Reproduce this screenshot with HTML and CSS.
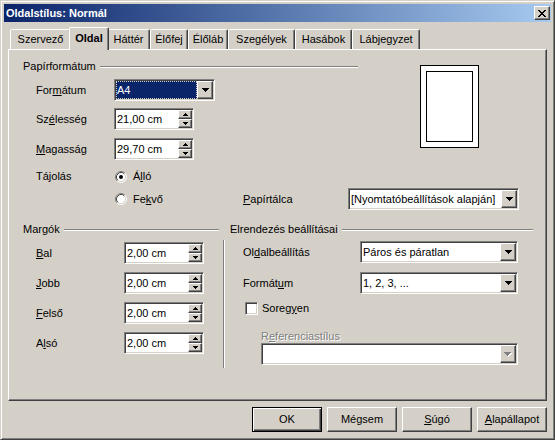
FILE: index.html
```html
<!DOCTYPE html>
<html lang="hu">
<head>
<meta charset="utf-8">
<title>Oldalstílus: Normál</title>
<link rel="stylesheet" href="styles.css">
</head>
<body>
<div class="dialog">
  <div class="titlebar">
    <span class="title">Oldalstílus: Normál</span>
    <span class="close"><svg width="8" height="7" viewBox="0 0 8 7"><path d="M0 0h2v1H0zM6 0h2v1H6zM1 1h2v1H1zM5 1h2v1H5zM2 2h4v1H2zM3 3h2v1H3zM2 4h4v1H2zM1 5h2v1H1zM5 5h2v1H5zM0 6h2v1H0zM6 6h2v1H6z"/></svg></span>
  </div>

  <div class="tabs">
    <div class="tab">Szervező</div>
    <div class="tab active">Oldal</div>
    <div class="tab">Háttér</div>
    <div class="tab">Élőfej</div>
    <div class="tab">Élőláb</div>
    <div class="tab">Szegélyek</div>
    <div class="tab">Hasábok</div>
    <div class="tab">Lábjegyzet</div>
  </div>

  <div class="panel">
    <div class="paper">
      <div class="group-head head w335"><span>Papírformátum</span><span class="rule"></span></div>
      <div class="preview"><div class="page"></div></div>

      <div class="lbl fl">For<u>m</u>átum</div>
      <div class="combo fc w101">
        <span class="val sel">A4</span>
        <span class="ddbtn"><svg width="7" height="4" viewBox="0 0 7 4"><path d="M0 0h7v1H0zM1 1h5v1H1zM2 2h3v1H2zM3 3h1v1H3z"/></svg></span>
      </div>

      <div class="lbl wl">Sz<u>é</u>lesség</div>
      <div class="spin wc">
        <span class="val">21,00 cm</span>
        <span class="spinbtns">
          <span class="sb"><svg width="5" height="3" viewBox="0 0 5 3"><path d="M2 0h1v1H2zM1 1h3v1H1zM0 2h5v1H0z"/></svg></span>
          <span class="sb"><svg width="5" height="3" viewBox="0 0 5 3"><path d="M0 0h5v1H0zM1 1h3v1H1zM2 2h1v1H2z"/></svg></span>
        </span>
      </div>

      <div class="lbl hl"><u>M</u>agasság</div>
      <div class="spin hc">
        <span class="val">29,70 cm</span>
        <span class="spinbtns">
          <span class="sb"><svg width="5" height="3" viewBox="0 0 5 3"><path d="M2 0h1v1H2zM1 1h3v1H1zM0 2h5v1H0z"/></svg></span>
          <span class="sb"><svg width="5" height="3" viewBox="0 0 5 3"><path d="M0 0h5v1H0zM1 1h3v1H1zM2 2h1v1H2z"/></svg></span>
        </span>
      </div>

      <div class="lbl short ol">Tájolás</div>
      <div class="radio-item short oa">
        <svg class="radio" width="12" height="12" viewBox="0 0 12 12">
          <circle cx="6" cy="6" r="5" fill="#fff"/>
          <path d="M2.11 9.89A5.5 5.5 0 0 1 9.89 2.11" fill="none" stroke="#808080"/>
          <path d="M9.89 2.11A5.5 5.5 0 0 1 2.11 9.89" fill="none" stroke="#fff"/>
          <path d="M2.82 9.18A4.5 4.5 0 0 1 9.18 2.82" fill="none" stroke="#404040"/>
          <path d="M9.18 2.82A4.5 4.5 0 0 1 2.82 9.18" fill="none" stroke="#d4d0c8"/>
          <circle cx="6" cy="6" r="2" fill="#000"/>
        </svg>
        <span>Á<u>l</u>ló</span>
      </div>

      <div class="radio-item ob">
        <svg class="radio" width="12" height="12" viewBox="0 0 12 12">
          <circle cx="6" cy="6" r="5" fill="#fff"/>
          <path d="M2.11 9.89A5.5 5.5 0 0 1 9.89 2.11" fill="none" stroke="#808080"/>
          <path d="M9.89 2.11A5.5 5.5 0 0 1 2.11 9.89" fill="none" stroke="#fff"/>
          <path d="M2.82 9.18A4.5 4.5 0 0 1 9.18 2.82" fill="none" stroke="#404040"/>
          <path d="M9.18 2.82A4.5 4.5 0 0 1 2.82 9.18" fill="none" stroke="#d4d0c8"/>
        </svg>
        <span>Fe<u>k</u>vő</span>
      </div>
      <div class="lbl tl"><u>P</u>apírtálca</div>
      <div class="combo tc w171">
        <span class="val">[Nyomtatóbeállítások alapján]</span>
        <span class="ddbtn"><svg width="7" height="4" viewBox="0 0 7 4"><path d="M0 0h7v1H0zM1 1h5v1H1zM2 2h3v1H2zM3 3h1v1H3z"/></svg></span>
      </div>
    </div>

    <div class="layout">
      <div class="margins">
        <div class="group-head"><span>Margók</span><span class="rule"></span></div>
        <div class="mrow first">
          <span class="mlabel"><u>B</u>al</span>
          <div class="spin">
            <span class="val">2,00 cm</span>
            <span class="spinbtns">
              <span class="sb"><svg width="5" height="3" viewBox="0 0 5 3"><path d="M2 0h1v1H2zM1 1h3v1H1zM0 2h5v1H0z"/></svg></span>
              <span class="sb"><svg width="5" height="3" viewBox="0 0 5 3"><path d="M0 0h5v1H0zM1 1h3v1H1zM2 2h1v1H2z"/></svg></span>
            </span>
          </div>
        </div>
        <div class="mrow">
          <span class="mlabel"><u>J</u>obb</span>
          <div class="spin">
            <span class="val">2,00 cm</span>
            <span class="spinbtns">
              <span class="sb"><svg width="5" height="3" viewBox="0 0 5 3"><path d="M2 0h1v1H2zM1 1h3v1H1zM0 2h5v1H0z"/></svg></span>
              <span class="sb"><svg width="5" height="3" viewBox="0 0 5 3"><path d="M0 0h5v1H0zM1 1h3v1H1zM2 2h1v1H2z"/></svg></span>
            </span>
          </div>
        </div>
        <div class="mrow">
          <span class="mlabel"><u>F</u>első</span>
          <div class="spin">
            <span class="val">2,00 cm</span>
            <span class="spinbtns">
              <span class="sb"><svg width="5" height="3" viewBox="0 0 5 3"><path d="M2 0h1v1H2zM1 1h3v1H1zM0 2h5v1H0z"/></svg></span>
              <span class="sb"><svg width="5" height="3" viewBox="0 0 5 3"><path d="M0 0h5v1H0zM1 1h3v1H1zM2 2h1v1H2z"/></svg></span>
            </span>
          </div>
        </div>
        <div class="mrow">
          <span class="mlabel">A<u>l</u>só</span>
          <div class="spin">
            <span class="val">2,00 cm</span>
            <span class="spinbtns">
              <span class="sb"><svg width="5" height="3" viewBox="0 0 5 3"><path d="M2 0h1v1H2zM1 1h3v1H1zM0 2h5v1H0z"/></svg></span>
              <span class="sb"><svg width="5" height="3" viewBox="0 0 5 3"><path d="M0 0h5v1H0zM1 1h3v1H1zM2 2h1v1H2z"/></svg></span>
            </span>
          </div>
        </div>
      </div>

      <div class="vsep"></div>

      <div class="arrange">
        <div class="group-head"><span>Elrendezés beállításai</span><span class="rule"></span></div>
        <div class="arow first">
          <span class="alabel">Ol<u>d</u>albeállítás</span>
          <div class="combo w158">
            <span class="val">Páros és páratlan</span>
            <span class="ddbtn"><svg width="7" height="4" viewBox="0 0 7 4"><path d="M0 0h7v1H0zM1 1h5v1H1zM2 2h3v1H2zM3 3h1v1H3z"/></svg></span>
          </div>
        </div>
        <div class="arow">
          <span class="alabel">Formát<u>u</u>m</span>
          <div class="combo w158">
            <span class="val">1, 2, 3, ...</span>
            <span class="ddbtn"><svg width="7" height="4" viewBox="0 0 7 4"><path d="M0 0h7v1H0zM1 1h5v1H1zM2 2h3v1H2zM3 3h1v1H3z"/></svg></span>
          </div>
        </div>
        <div class="check-row">
          <span class="check"></span>
          <span class="check-text">Soreg<u>y</u>en</span>
        </div>
        <div class="ref-label">R<u>e</u>ferenciastílus</div>
        <div class="combo disabled w257">
          <span class="val"></span>
          <span class="ddbtn"><svg width="8" height="5" viewBox="0 0 8 5"><path fill="#fff" d="M1 1h7v1H1zM2 2h5v1H2zM3 3h3v1H3zM4 4h1v1H4z"/><path fill="#808080" d="M0 0h7v1H0zM1 1h5v1H1zM2 2h3v1H2zM3 3h1v1H3z"/></svg></span>
        </div>
      </div>
    </div>
  </div>

  <div class="buttons">
    <button class="btn default">OK</button>
    <button class="btn">Mégsem</button>
    <button class="btn"><u>S</u>úgó</button>
    <button class="btn"><u>A</u>lapállapot</button>
  </div>
</div>
</body>
</html>
```

FILE: styles.css
```css
* { box-sizing: border-box; }

body {
  margin: 0;
  font-family: "Liberation Sans", Arial, sans-serif;
  font-size: 11px;
  line-height: 13px;
  color: #000;
  background: #d4d0c8;
}

u { text-decoration: underline; text-underline-offset: 1px; }

.dialog {
  width: 555px;
  height: 440px;
  padding: 3px;
  background: #d4d0c8;
  border: 1px solid;
  border-color: #d4d0c8 #404040 #404040 #d4d0c8;
  box-shadow: inset 1px 1px #fff, inset -1px -1px #808080;
  display: flex;
  flex-direction: column;
}

/* title bar */
.titlebar {
  height: 18px;
  flex: none;
  display: flex;
  align-items: center;
  justify-content: space-between;
  padding-left: 2px;
  background: linear-gradient(to right, #0a246a, #a6caf0);
  color: #fff;
  font-weight: bold;
}
.title { line-height: 18px; }
.close {
  width: 16px;
  height: 14px;
  margin-right: 1px;
  display: flex;
  align-items: center;
  justify-content: center;
  background: #d4d0c8;
  border: 1px solid;
  border-color: #fff #404040 #404040 #fff;
  box-shadow: inset -1px -1px #808080;
}
.close svg { display: block; fill: #000; }

/* tabs */
.tabs {
  height: 27px;
  flex: none;
  display: flex;
  align-items: flex-end;
  padding-left: 6px;
}
.tab {
  height: 20px;
  display: flex;
  align-items: center;
  justify-content: center;
  white-space: nowrap;
  border: 1px solid;
  border-bottom: 0;
  border-color: #fff #404040 transparent #fff;
  border-radius: 2px 2px 0 0;
  box-shadow: inset -1px 0 #808080;
  background: #d4d0c8;
}
.tab:nth-child(1) { width: 61px; }
.tab:nth-child(2) { width: 40px; }
.tab:nth-child(3) { width: 43px; }
.tab:nth-child(4) { width: 38px; }
.tab:nth-child(5) { width: 40px; }
.tab:nth-child(6) { width: 67px; }
.tab:nth-child(7) { width: 57px; }
.tab:nth-child(8) { width: 68px; }
.tab.active {
  height: 23px;
  margin: 0 -2px -1px;
  padding-bottom: 2px;
  font-weight: bold;
  position: relative;
  z-index: 1;
}

/* panel */
.panel {
  flex: none;
  height: 352px;
  margin: 0 4px;
  padding: 10px 0 0 14px;
  border: 1px solid;
  border-color: #fff #404040 #404040 #fff;
  box-shadow: inset -1px -1px #808080;
}

.group-head {
  display: flex;
  align-items: flex-start;
  white-space: nowrap;
}
.group-head .rule {
  flex: 1;
  height: 2px;
  margin: 6px 0 0 4px;
  border-top: 1px solid #808080;
  border-bottom: 1px solid #fff;
}
.w335 { width: 335px; }

.paper {
  display: grid;
  grid-template-columns: 13px 78px 129px 105px 1fr;
  grid-template-rows: 19px 29px 30px 30px 17px 25px;
  grid-template-areas:
    "head head head head prev"
    ".    fl   fc   .    prev"
    ".    wl   wc   .    prev"
    ".    hl   hc   .    prev"
    ".    ol   oa   .    ."
    ".    .    ob   tl   tc";
  align-items: start;
  justify-items: start;
}
.head { grid-area: head; }
.preview { grid-area: prev; }
.fl { grid-area: fl; } .fc { grid-area: fc; }
.wl { grid-area: wl; } .wc { grid-area: wc; }
.hl { grid-area: hl; } .hc { grid-area: hc; }
.ol { grid-area: ol; } .oa { grid-area: oa; }
.ob { grid-area: ob; align-self: end; }
.tl { grid-area: tl; align-self: end; }
.tc { grid-area: tc; align-self: end; }

.lbl {
  height: 22px;
  display: flex;
  align-items: center;
  white-space: nowrap;
}
.short { height: 17px; }

.preview {
  width: 59px;
  height: 83px;
  margin: 5px 0 0 72px;
  padding: 5px;
  background: #fff;
  border: 1px solid #000;
}
.page {
  width: 100%;
  height: 100%;
  border: 1px solid #000;
}

.radio-item {
  height: 22px;
  display: flex;
  align-items: center;
  padding-left: 1px;
}
.radio-item.short { height: 17px; }
.radio { display: block; flex: none; margin-right: 6px; }

/* sunken fields */
.combo, .spin {
  height: 22px;
  display: flex;
  padding: 1px;
  background: #fff;
  border: 1px solid;
  border-color: #808080 #fff #fff #808080;
  box-shadow: inset 1px 1px #404040, inset -1px -1px #d4d0c8;
}
.spin { width: 80px; }
.w101 { width: 101px; }
.w171 { width: 171px; }
.w158 { width: 158px; }
.w257 { width: 257px; }

.val {
  flex: 1;
  min-width: 0;
  display: flex;
  align-items: center;
  padding-left: 1px;
  white-space: nowrap;
  overflow: hidden;
}
.val.sel {
  background: #0a246a;
  color: #fff;
  outline: 1px dotted #d4d0c8;
  outline-offset: -1px;
}

.ddbtn, .sb {
  display: flex;
  align-items: center;
  justify-content: center;
  background: #d4d0c8;
  border: 1px solid;
  border-color: #fff #404040 #404040 #fff;
  box-shadow: inset -1px -1px #808080;
}
.ddbtn { width: 16px; flex: none; }
.ddbtn svg, .sb svg { display: block; fill: #000; }

.spinbtns {
  width: 14px;
  flex: none;
  display: flex;
  flex-direction: column;
}
.sb { flex: 1; }

/* lower section */
.layout {
  display: flex;
  margin-top: 13px;
}
.margins { width: 196px; flex: none; }
.mrow {
  height: 22px;
  display: flex;
  align-items: center;
  padding-left: 13px;
  margin-top: 8px;
}
.mrow.first { margin-top: 6px; }
.mlabel { width: 88px; flex: none; }

.vsep {
  width: 2px;
  height: 128px;
  margin: 17px 0 0 4px;
  border-left: 1px solid #808080;
  border-right: 1px solid #fff;
}

.arrange { width: 303px; margin-left: 5px; }
.arow {
  height: 22px;
  display: flex;
  align-items: center;
  padding-left: 13px;
  margin-top: 9px;
}
.arow.first { margin-top: 5px; }
.alabel { width: 117px; flex: none; }

.check-row {
  height: 13px;
  display: flex;
  align-items: center;
  margin: 8px 0 0 15px;
}
.check {
  width: 13px;
  height: 13px;
  flex: none;
  background: #fff;
  border: 1px solid;
  border-color: #808080 #fff #fff #808080;
  box-shadow: inset 1px 1px #404040, inset -1px -1px #d4d0c8;
}
.check-text { margin-left: 4px; }

.ref-label {
  margin: 15px 0 0 31px;
  color: #808080;
  text-shadow: 1px 1px 0 #fff;
}
.combo.disabled { margin-left: 31px; }

/* buttons */
.buttons {
  flex: none;
  display: flex;
  justify-content: flex-end;
  gap: 5px;
  margin: 6px 4px 0 0;
}
.btn {
  width: 70px;
  height: 25px;
  padding: 0;
  font: inherit;
  color: #000;
  background: #d4d0c8;
  border: 1px solid;
  border-color: #fff #404040 #404040 #fff;
  box-shadow: inset -1px -1px #808080;
  display: flex;
  align-items: center;
  justify-content: center;
}
.btn.default {
  border-color: #000;
  box-shadow: inset 1px 1px #fff, inset -1px -1px #404040, inset -2px -2px #808080;
}
```
